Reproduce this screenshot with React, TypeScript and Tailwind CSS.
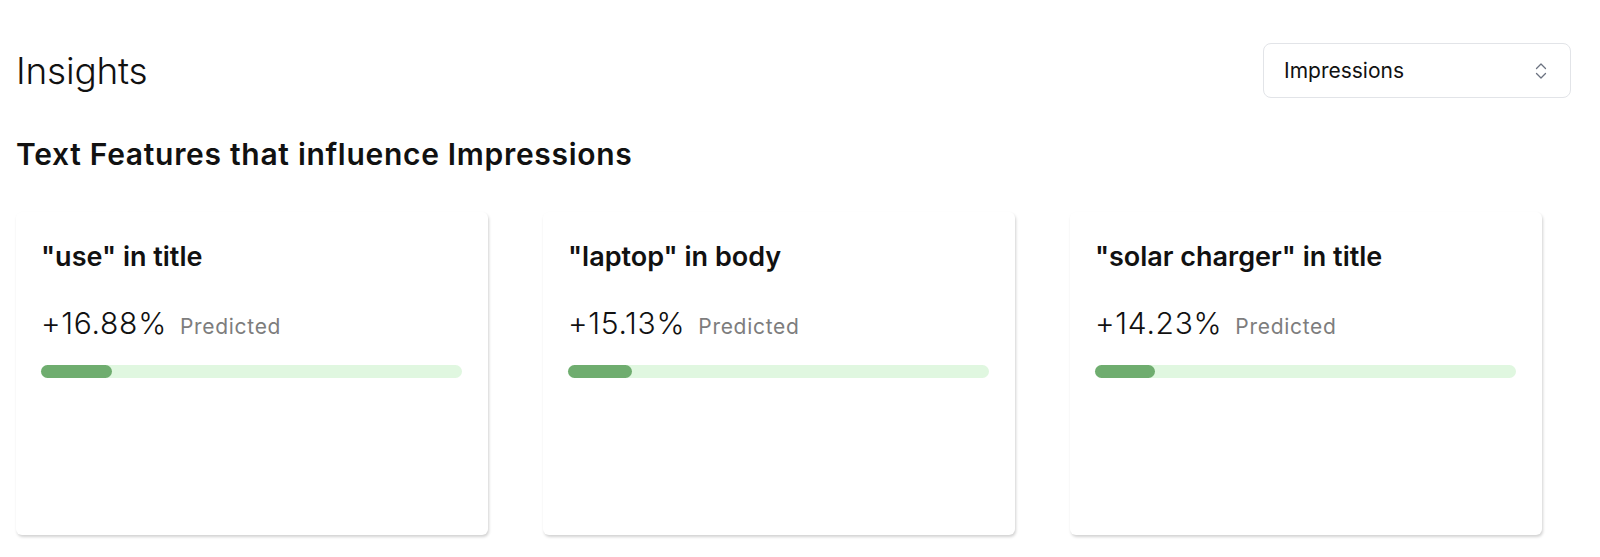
import React from "react";

const cards = [
  { title: '"use" in title', value: 16.88 },
  { title: '"laptop" in body', value: 15.13 },
  { title: '"solar charger" in title', value: 14.23 },
];

function UpDown() {
  return (
    <svg width="12" height="18" viewBox="0 0 12 18" fill="none" stroke="#6b7280" strokeWidth="1.3" strokeLinecap="round" strokeLinejoin="round">
      <polyline points="1.5,6.5 6,2 10.5,6.5" />
      <polyline points="1.5,11.5 6,16 10.5,11.5" />
    </svg>
  );
}

export default function App() {
  return (
    <div
      className="w-[1600px] h-[557px] bg-white text-[#111] overflow-hidden"
      style={{ fontFamily: "Inter, 'Noto Sans', sans-serif" }}
    >
      <div className="pl-4 pr-[29px] pt-[43px]">
        <div className="flex items-center justify-between h-[55px]">
          <h1 className="text-[37px] font-light leading-none tracking-[-0.2px]">Insights</h1>
          <button className="w-[308px] h-[55px] rounded-lg border border-[#e2e4e8] bg-white flex items-center justify-between pl-5 pr-[23px]">
            <span className="text-[21px] text-[#111] leading-none">Impressions</span>
            <UpDown />
          </button>
        </div>
        <h2 className="mt-[38px] text-[30px] font-semibold leading-[36px] tracking-[0.7px]">
          Text Features that influence Impressions
        </h2>
        <div className="mt-[40px] flex gap-[55px]">
          {cards.map((c) => (
            <div
              key={c.title}
              className="w-[472px] h-[323px] rounded-md bg-white shadow-[1px_2px_3px_rgba(0,0,0,0.18)] px-[25px] pt-[28px]"
            >
              <div className="text-[27px] font-semibold leading-[34px]">{c.title}</div>
              <div className="mt-[31px] flex items-baseline gap-[13px]">
                <span className="text-[30px] font-light leading-[36px] tracking-[0.7px]">+{c.value.toFixed(2)}%</span>
                <span className="text-[21px] text-[#7d7d7d] tracking-[0.7px]">Predicted</span>
              </div>
              <div className="mt-[22px] h-[13px] w-[421px] rounded-full bg-[#e0f7e0]">
                <div
                  className="h-full rounded-full bg-[#6fad6f]"
                  style={{ width: `${c.value}%` }}
                />
              </div>
            </div>
          ))}
        </div>
      </div>
    </div>
  );
}
